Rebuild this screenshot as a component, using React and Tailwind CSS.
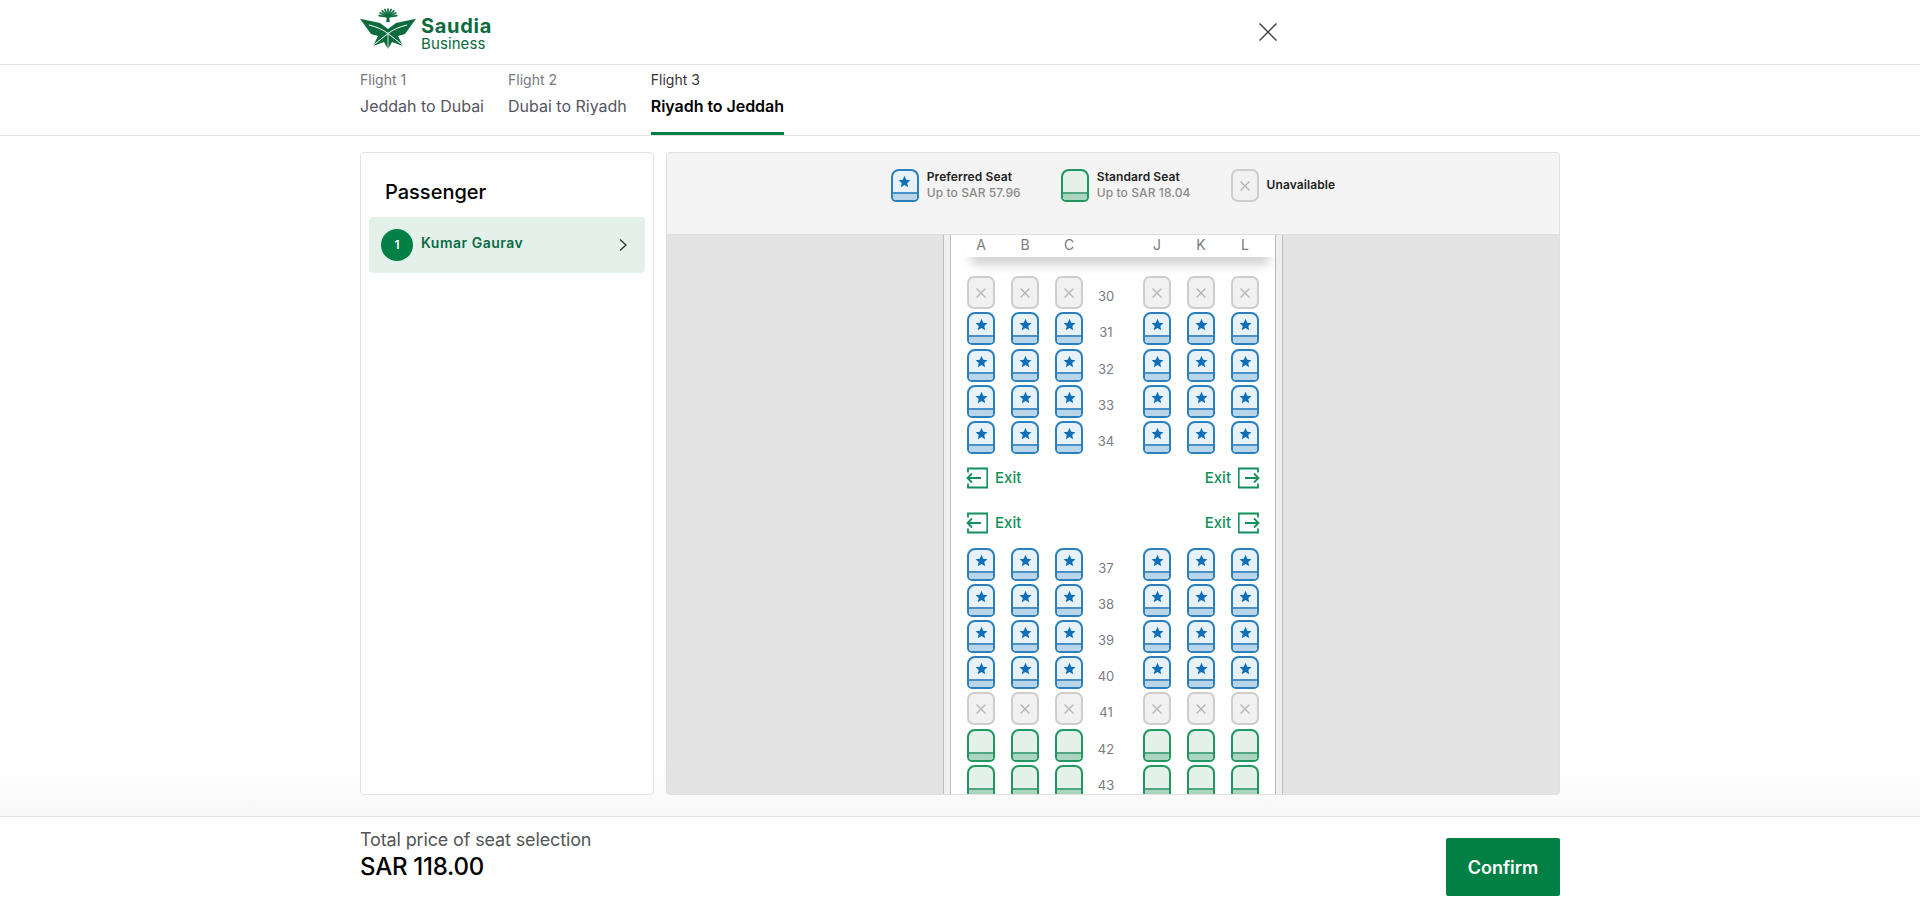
import React from "react";

function Star({ className }) {
  return (
    <svg viewBox="0 0 24 24" className={className} fill="currentColor">
      <path d="M12 1.500l3.200 7.200 7.800.8-5.900 5.200 1.700 7.700-6.800-4-6.800 4 1.700-7.700L1 9.500l7.800-.8z" />
    </svg>
  );
}

function Cross({ className }) {
  return (
    <svg viewBox="0 0 12 12" className={className} fill="none" stroke="currentColor" strokeWidth="1.300">
      <path d="M1.500 1.500l9 9M10.500 1.500l-9 9" />
    </svg>
  );
}

function PreferredSeat() {
  return (
    <div className="w-7 h-[33px] shrink-0 flex flex-col border-2 border-[#2a80bd] rounded-t-[8px] rounded-b-[5px] bg-[#e6f1f8] overflow-hidden">
      <div className="flex-1 flex items-center justify-center">
        <Star className="w-[13px] h-[13px] text-[#0f70b7]" />
      </div>
      <div className="h-[8px] bg-[#b9d5ea] border-t-2 border-[#4a90c4]"></div>
    </div>
  );
}

function StandardSeat() {
  return (
    <div className="w-7 h-[33px] shrink-0 flex flex-col border-2 border-[#21965f] rounded-t-[8px] rounded-b-[5px] bg-[#e3f1ea] overflow-hidden">
      <div className="flex-1"></div>
      <div className="h-[8px] bg-[#aad6c0] border-t-2 border-[#4fa67f]"></div>
    </div>
  );
}

function BlockedSeat() {
  return (
    <div className="w-7 h-[33px] shrink-0 flex items-center justify-center border-2 border-[#cdcdcd] rounded-[7px] bg-[#f1f1f1]">
      <Cross className="w-[12px] h-[12px] text-[#b4b4b4]" />
    </div>
  );
}

const seatByType = { p: PreferredSeat, s: StandardSeat, x: BlockedSeat };

function SeatRow({ num, type }) {
  const Seat = seatByType[type];
  return (
    <div className="flex gap-4 h-[36.2px] shrink-0">
      <Seat />
      <Seat />
      <Seat />
      <div className="w-7 -ml-[7px] mr-[7px] pt-[10px] text-center text-[13px] leading-5 text-[#7b7b84]">{num}</div>
      <Seat />
      <Seat />
      <Seat />
    </div>
  );
}

function ExitLeft() {
  return (
    <div className="flex items-center gap-[7px]">
      <svg viewBox="0 0 22 22" className="w-[22px] h-[22px] text-[#12905a]" fill="none" stroke="currentColor" strokeWidth="1.800">
        <path d="M2 5.500V1.500h19.300v19H2V16.500" />
        <path d="M15 11H1.500M6 6.500L1.500 11 6 15.500" />
      </svg>
      <span className="text-[15px] font-medium text-[#12905a]">Exit</span>
    </div>
  );
}

function ExitRight() {
  return (
    <div className="flex items-center gap-[7px]">
      <span className="text-[15px] font-medium text-[#12905a]">Exit</span>
      <svg viewBox="0 0 22 22" className="w-[22px] h-[22px] text-[#12905a]" fill="none" stroke="currentColor" strokeWidth="1.800">
        <path d="M20 5.500V1.500H.7v19H20V16.500" />
        <path d="M7 11h13.500M16 6.500l4.500 4.500-4.500 4.500" />
      </svg>
    </div>
  );
}

function ExitRow({ className }) {
  return (
    <div className={"flex justify-between h-[22px] shrink-0 -mx-px " + className}>
      <ExitLeft />
      <ExitRight />
    </div>
  );
}

function Logo() {
  const fronds = [-80, -60, -40, -20, 0, 20, 40, 60, 80];
  return (
    <div className="flex items-start">
      <svg viewBox="0 0 56 42" className="w-[56px] h-[42px] mt-[8px] text-[#0b6b3d]" fill="currentColor">
        <g stroke="currentColor" strokeWidth="1.700" strokeLinecap="round">
          {fronds.map((a) => (
            <line
              key={a}
              x1="28"
              y1="9"
              x2={28 + 9 * Math.sin((a * Math.PI) / 180)}
              y2={9 - 8 * Math.cos((a * Math.PI) / 180)}
            />
          ))}
        </g>
        <path d="M26.800 8h2.400l.5 6h-3.400z" />
        <path d="M0 10.700L20 15l8 6 8-6 20-4.300L45 26l-7 2 5 10-11-4-4 7-4-7-11 4 5-10-7-2z" />
        <g fill="none" stroke="#ffffff" strokeWidth="1">
          <path d="M11 39L28 25.500Q35 20 47 17" />
          <path d="M45 39L28 25.500Q21 20 9 17" />
          <path d="M28 25.500V41" strokeWidth="0.800" />
        </g>
      </svg>
      <div className="ml-[5px] mt-[16px] flex flex-col text-[#0b6b3d]">
        <span className="text-[20px] leading-[20px] font-bold tracking-[0.7px]">Saudia</span>
        <span className="text-[15px] leading-[16px] tracking-[0.1px] font-normal">Business</span>
      </div>
    </div>
  );
}

function Tab({ label, route, active }) {
  return (
    <div className={"flex flex-col h-[70px] border-b-[3px] " + (active ? "border-[#008045]" : "border-transparent")}>
      <span className={"mt-[5px] text-[14px] leading-5 " + (active ? "text-[#333333]" : "text-[#77777f]")}>{label}</span>
      <span className={"mt-[4px] text-[16px] leading-6 " + (active ? "font-semibold tracking-[-0.05px] text-black" : "text-[#555560]")}>{route}</span>
    </div>
  );
}

function LegendItem({ seat, title, sub }) {
  return (
    <div className="flex items-start gap-2">
      {seat}
      <div className={"flex flex-col text-[12px] leading-4 tracking-[0.1px] " + (sub ? "" : "pt-2")}>
        <span className="font-semibold text-[#222222]">{title}</span>
        {sub && <span className="font-medium text-[#8a8a8a]">{sub}</span>}
      </div>
    </div>
  );
}

export default function App() {
  return (
    <div className="h-[901px] flex flex-col bg-white overflow-hidden font-['Inter',sans-serif]">
      <header className="h-[65px] shrink-0 border-b border-[#e2e2e2] flex justify-center">
        <div className="w-[1200px] flex items-start">
          <div className="w-[917px] flex justify-between items-start">
            <Logo />
            <button className="mt-[23px] text-[#444444]">
              <svg viewBox="0 0 18 18" className="w-[18px] h-[18px]" fill="none" stroke="currentColor" strokeWidth="1.500">
                <path d="M.5.500l17 17M17.500.500l-17 17" />
              </svg>
            </button>
          </div>
        </div>
      </header>

      <nav className="h-[71px] shrink-0 border-b border-[#e2e2e2] flex justify-center">
        <div className="w-[1200px] flex gap-6">
          <Tab label="Flight 1" route="Jeddah to Dubai" />
          <Tab label="Flight 2" route="Dubai to Riyadh" />
          <Tab label="Flight 3" route="Riyadh to Jeddah" active />
        </div>
      </nav>

      <main className="flex-1 min-h-0 flex justify-center pt-4 pb-[21px] bg-linear-to-b from-white from-92% to-[#f8f8f8]">
        <div className="w-[1200px] flex gap-3">
          <aside className="w-[294px] shrink-0 border border-[#e2e2e2] rounded-[4px] bg-white p-2">
            <h2 className="ml-4 mt-[17px] text-[20px] leading-7 font-medium text-black">Passenger</h2>
            <div className="mt-[11px] h-14 rounded-[4px] bg-[#e3f1ea] flex items-center px-3">
              <div className="w-8 h-8 rounded-full bg-[#008045] flex items-center justify-center text-[12px] font-semibold text-white">1</div>
              <span className="ml-2 mb-[5px] text-[14px] font-semibold tracking-[0.5px] text-[#0c6b47]">Kumar Gaurav</span>
              <svg viewBox="0 0 10 14" className="ml-auto mr-[5px] w-[10px] h-[14px] text-[#333333]" fill="none" stroke="currentColor" strokeWidth="1.300">
                <path d="M2 1.500L8 7l-6 5.500" />
              </svg>
            </div>
          </aside>

          <section className="flex-1 min-w-0 flex flex-col rounded-[4px] border border-[#e0e0e0] overflow-hidden bg-[#e3e3e3]">
            <div className="h-[82px] shrink-0 bg-[#f4f4f4] border-b border-[#dedede] flex justify-center gap-10 pt-4">
              <LegendItem seat={<PreferredSeat />} title="Preferred Seat" sub="Up to SAR 57.96" />
              <LegendItem seat={<StandardSeat />} title="Standard Seat" sub="Up to SAR 18.04" />
              <LegendItem seat={<BlockedSeat />} title="Unavailable" />
            </div>
            <div className="flex-1 min-h-0 flex justify-center overflow-hidden">
              <div className="w-[340px] border-x border-[#bdbdbd] bg-[#efefef] px-[6px]">
                <div className="relative h-full border-x border-[#bdbdbd] bg-white px-4">
                  <div className="absolute left-[14px] right-0 top-0 h-[22px] bg-white shadow-[0_12px_12px_-6px_rgba(0,0,0,0.25)]"></div>
                  <div className="relative flex gap-4 h-[22px] text-[14px] leading-5 text-[#7a7a7a] text-center">
                    <span className="w-7">A</span>
                    <span className="w-7">B</span>
                    <span className="w-7">C</span>
                    <span className="w-7"></span>
                    <span className="w-7">J</span>
                    <span className="w-7">K</span>
                    <span className="w-7">L</span>
                  </div>
                  <div className="mt-[19.3px] flex flex-col">
                    <SeatRow num="30" type="x" />
                    <SeatRow num="31" type="p" />
                    <SeatRow num="32" type="p" />
                    <SeatRow num="33" type="p" />
                    <SeatRow num="34" type="p" />
                    <ExitRow className="mt-[10px]" />
                    <ExitRow className="mt-[23px]" />
                    <div className="mt-[13.5px] flex flex-col">
                      <SeatRow num="37" type="p" />
                      <SeatRow num="38" type="p" />
                      <SeatRow num="39" type="p" />
                      <SeatRow num="40" type="p" />
                      <SeatRow num="41" type="x" />
                      <SeatRow num="42" type="s" />
                      <SeatRow num="43" type="s" />
                    </div>
                  </div>
                </div>
              </div>
            </div>
          </section>
        </div>
      </main>

      <footer className="h-[85px] shrink-0 border-t border-[#e2e2e2] bg-white flex justify-center">
        <div className="w-[1200px] flex justify-between items-start">
          <div className="flex flex-col mt-[11px]">
            <span className="text-[18px] leading-6 tracking-[-0.14px] text-[#555555]">Total price of seat selection</span>
            <span className="mt-px text-[24px] leading-7 font-medium tracking-[-0.25px] text-black">SAR 118.00</span>
          </div>
          <button className="mt-[21px] w-[114px] h-[58px] rounded-[2px] bg-[#008045] text-[18px] font-semibold text-white">Confirm</button>
        </div>
      </footer>
    </div>
  );
}
